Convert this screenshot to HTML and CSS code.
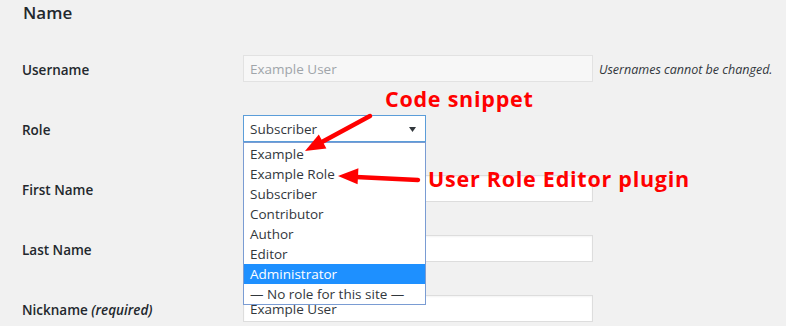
FILE: index.html
```html
<!DOCTYPE html>
<html lang="en">
<head>
<meta charset="utf-8">
<title>Name</title>
<link rel="stylesheet" href="styles.css">
</head>
<body>
<div class="page">
  <h2 class="title">Name</h2>
  <div class="form">
    <div class="row">
      <div class="label">Username</div>
      <div class="field">
        <div class="input input-disabled">Example User</div>
        <span class="desc">Usernames cannot be changed.</span>
      </div>
    </div>
    <div class="row">
      <div class="label">Role</div>
      <div class="field">
        <div class="select">
          <span>Subscriber</span>
          <svg class="caret" width="7" height="5" viewBox="0 0 7 5"><polygon points="0,0 7,0 3.5,5" fill="#32373c"/></svg>
        </div>
      </div>
    </div>
    <div class="row">
      <div class="label">First Name</div>
      <div class="field"><div class="input"></div></div>
    </div>
    <div class="row">
      <div class="label">Last Name</div>
      <div class="field"><div class="input"></div></div>
    </div>
    <div class="row">
      <div class="label">Nickname <em>(required)</em></div>
      <div class="field"><div class="input">Example User</div></div>
    </div>
  </div>

  <ul class="dropdown">
    <li>Example</li>
    <li>Example Role</li>
    <li>Subscriber</li>
    <li>Contributor</li>
    <li>Author</li>
    <li>Editor</li>
    <li class="selected">Administrator</li>
    <li>— No role for this site —</li>
  </ul>

  <div class="note note-code">Code snippet</div>
  <div class="note note-ure">User Role Editor plugin</div>

  <svg class="arrows" width="786" height="326" viewBox="0 0 786 326">
    <line x1="370" y1="116" x2="321" y2="142.5" stroke="#ff0000" stroke-width="4.5" stroke-linecap="round"/>
    <polygon points="305,151 326.4,148.5 318.8,134.5" fill="#ff0000"/>
    <line x1="418" y1="180" x2="356" y2="177" stroke="#ff0000" stroke-width="4.5" stroke-linecap="round"/>
    <polygon points="338,176 358.4,168.2 357.6,184.2" fill="#ff0000"/>
  </svg>
</div>
</body>
</html>
```

FILE: styles.css
```css
html, body {
  margin: 0;
  padding: 0;
  background: #f1f1f1;
}

body {
  font-family: "Open Sans", "Liberation Sans", sans-serif;
  color: #23282d;
  width: 786px;
  height: 326px;
  overflow: hidden;
}

.page {
  position: relative;
  width: 786px;
  height: 326px;
  padding-left: 22px;
  box-sizing: border-box;
}

.title {
  margin: 0;
  height: 39px;
  box-sizing: border-box;
  padding-top: 3px;
  padding-left: 1px;
  font-size: 17px;
  line-height: 20px;
  font-weight: 600;
  color: #23282d;
}

.row {
  display: grid;
  grid-template-columns: 221px 1fr;
  height: 60px;
}

.label {
  padding-top: 21px;
  font-size: 13.5px;
  line-height: 20px;
  font-weight: 600;
  color: #23282d;
}

.label em {
  font-style: italic;
}

.field {
  display: flex;
  align-items: center;
  height: 27px;
  margin-top: 16px;
}

.input {
  box-sizing: border-box;
  width: 350px;
  height: 27px;
  border: 1px solid #dddddd;
  background: #ffffff;
  padding: 1px 6px 0;
  font-size: 13.5px;
  line-height: 24px;
  color: #32373c;
  box-shadow: inset 0 1px 2px rgba(0, 0, 0, 0.05);
}

.input-disabled {
  background: #f7f7f7;
  color: #a0a5aa;
  border-color: #e2e2e2;
  box-shadow: none;
}

.desc {
  margin-left: 6px;
  margin-top: 2px;
  font-size: 12.5px;
  font-style: italic;
  color: #32373c;
}

.select {
  box-sizing: border-box;
  width: 183px;
  height: 27px;
  border: 1px solid #5b9dd9;
  background: #ffffff;
  padding: 1px 9px 0 6px;
  font-size: 13.5px;
  line-height: 24px;
  color: #32373c;
  display: flex;
  align-items: center;
  justify-content: space-between;
}

.caret {
  display: block;
}

.dropdown {
  position: absolute;
  left: 243px;
  top: 142px;
  width: 183px;
  box-sizing: border-box;
  margin: 0;
  padding: 1px 0 0;
  list-style: none;
  background: #ffffff;
  border: 1px solid #7a9cd3;
}

.dropdown li {
  height: 20px;
  line-height: 20px;
  padding-left: 6px;
  font-size: 13.5px;
  color: #32373c;
  white-space: nowrap;
}

.dropdown li.selected {
  background: #1e90ff;
  color: #ffffff;
}

.note {
  position: absolute;
  font-family: "Open Sans", "Liberation Sans", sans-serif;
  font-weight: 700;
  font-size: 21.5px;
  letter-spacing: 0.75px;
  line-height: 24px;
  color: #ff0000;
  white-space: nowrap;
}

.note-code {
  left: 385px;
  top: 87px;
}

.note-ure {
  left: 428px;
  top: 167px;
}

.arrows {
  position: absolute;
  left: 0;
  top: 0;
  pointer-events: none;
}
```
